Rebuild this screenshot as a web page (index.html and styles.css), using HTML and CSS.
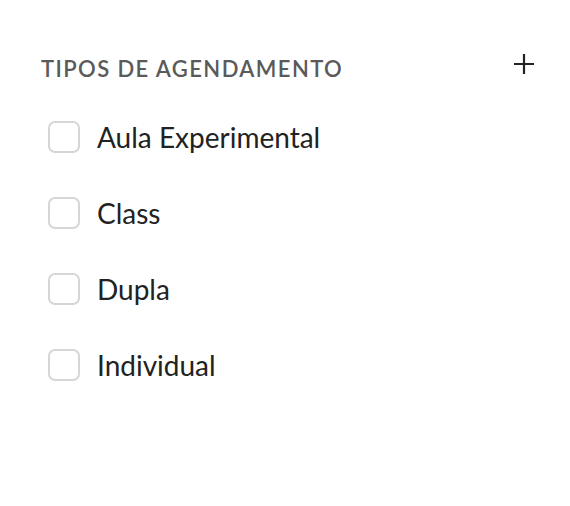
FILE: index.html
```html
<!DOCTYPE html>
<html lang="pt">
<head>
    <meta charset="UTF-8">
    <meta name="viewport" content="width=device-width, initial-scale=1.0">
    <title>Tipos de agendamento</title>
    <link rel="stylesheet" href="styles.css">
</head>
<body>
    <div class="panel">
        <div class="panel-header">
            <h2>TIPOS DE AGENDAMENTO</h2>
            <button class="add-btn" type="button" aria-label="Adicionar">
                <svg width="22" height="22" viewBox="0 0 22 22">
                    <path d="M11 1v20M1 11h20" stroke="#222" stroke-width="2.2" fill="none"/>
                </svg>
            </button>
        </div>
        <ul class="type-list">
            <li><label><input type="checkbox"><span class="box"></span>Aula Experimental</label></li>
            <li><label><input type="checkbox"><span class="box"></span>Class</label></li>
            <li><label><input type="checkbox"><span class="box"></span>Dupla</label></li>
            <li><label><input type="checkbox"><span class="box"></span>Individual</label></li>
        </ul>
    </div>
</body>
</html>
```

FILE: styles.css
```css
body {
    margin: 0;
    background-color: #fff;
    font-family: Lato, "Noto Sans", sans-serif;
}
.panel {
    padding: 52px 35px 0 41px;
}
.panel-header {
    display: flex;
    align-items: center;
    justify-content: space-between;
    height: 32px;
}
h2 {
    margin: 0;
    font-size: 22px;
    font-weight: 600;
    letter-spacing: 1.4px;
    color: #5a5a5a;
}
.add-btn {
    border: none;
    background: none;
    padding: 0;
    width: 22px;
    height: 22px;
    margin-bottom: 8px;
    cursor: pointer;
}
.add-btn svg {
    display: block;
}
.type-list {
    list-style: none;
    margin: 37px 0 0 7px;
    padding: 0;
}
.type-list li {
    height: 76px;
}
.type-list label {
    display: flex;
    align-items: center;
    height: 32px;
    font-size: 28px;
    color: #222;
    cursor: pointer;
}
.type-list input {
    display: none;
}
.box {
    width: 28px;
    height: 28px;
    border: 2px solid #d6d6d6;
    border-radius: 7px;
    margin-right: 17px;
    flex-shrink: 0;
}
```
